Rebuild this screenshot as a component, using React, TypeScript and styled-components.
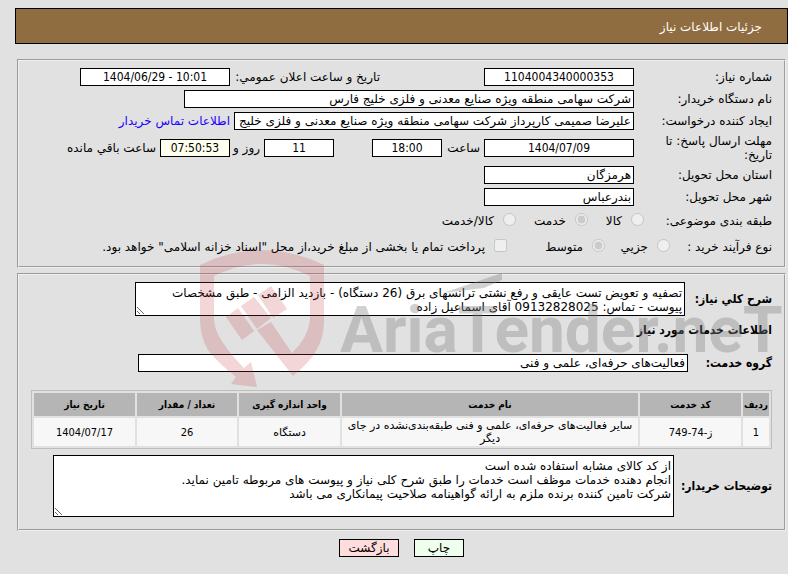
import React from 'react';
import styled, { createGlobalStyle } from 'styled-components';

const narrowFont = "'DejaVu Sans Condensed', 'DejaVu Sans', sans-serif";

const GlobalStyle = createGlobalStyle`
  * { box-sizing: border-box; }
  body {
    margin: 0;
    background: #e1e1e1;
    color: #000;
  }
  body, input, textarea, button {
    font-family: 'DejaVu Sans', sans-serif;
    font-size: 12px;
    line-height: 14px;
  }
`;

const Page = styled.main`
  direction: rtl;
  position: relative;
  padding: 8px 0 16px 15px;
  overflow: hidden;
`;

const TitleBar = styled.h1`
  margin: 0 0 15px;
  padding: 11px 25px 9px;
  border: 1px solid #000;
  background: #8f6d40;
  color: #fff;
  font-size: 12px;
  font-weight: normal;
  line-height: 14px;
`;

const Panel = styled.fieldset`
  min-width: 0;
  margin: 0 2px 5px;
  padding: 7px 12px 4px;
  border: 2px groove #f0f0f0;
`;

const DetailPanel = styled(Panel)`
  padding-bottom: 8px;
`;

const Row = styled.div<{ $height?: number }>`
  display: flex;
  align-items: center;
  gap: 4px;
  min-height: ${(p) => p.$height ?? 18}px;
  margin-bottom: 4px;
  white-space: nowrap;
`;

const Label = styled.label<{ $width?: number }>`
  flex: none;
  width: ${(p) => (p.$width ? `${p.$width}px` : 'auto')};
  white-space: nowrap;
`;

const BoldLabel = styled(Label)`
  font-family: ${narrowFont};
  font-weight: bold;
`;

const WrapLabel = styled(Label)`
  padding-left: 18px;
  white-space: normal;
`;

const Box = styled.input<{ $width: number }>`
  flex: 0 1 ${(p) => p.$width}px;
  width: ${(p) => p.$width}px;
  min-width: 0;
  height: 18px;
  padding: 1px 2px;
  border: 1px solid #000;
  border-radius: 0;
  background: #fff;
  text-align: right;
`;

const NumberBox = styled(Box)<{ $tint?: string }>`
  background: ${(p) => p.$tint ?? '#fff'};
  font-family: ${narrowFont};
  text-align: center;
`;

const Spacer = styled.span<{ $width: number }>`
  flex: none;
  width: ${(p) => p.$width}px;
`;

const ContactLink = styled.a`
  color: #1a00ff;
  text-decoration: none;
`;

const Choice = styled.label<{ $width?: number }>`
  display: flex;
  align-items: center;
  gap: 9px;
  flex: none;
  width: ${(p) => (p.$width ? `${p.$width}px` : 'auto')};

  input {
    flex: none;
    width: 13px;
    height: 13px;
    margin: 0 0 3px;
  }
`;

const Area = styled.textarea<{ $width: number; $height: number }>`
  flex: 0 1 ${(p) => p.$width}px;
  min-width: 0;
  height: ${(p) => p.$height}px;
  margin: 0;
  padding: 3px 2px 1px;
  border: 1px solid #000;
  border-radius: 0;
  background: #fff;
  overflow: hidden;
`;

const SectionTitle = styled.h2`
  margin: 7px 0 17px;
  font-family: ${narrowFont};
  font-size: 12px;
  font-weight: bold;
  line-height: 14px;
`;

const Items = styled.table`
  width: 100%;
  margin: 18px 0 6px;
  border: 1px solid #bdbdbd;
  border-collapse: separate;
  border-spacing: 2px;
  table-layout: fixed;
  font-size: 11px;
  line-height: 13px;
  text-align: center;

  th {
    height: 23px;
    padding: 1px 0;
    background: #b5b5b5;
    font-family: ${narrowFont};
    font-size: 10px;
  }
`;

const Cell = styled.td<{ $narrow?: boolean }>`
  height: 28px;
  padding: 1px;
  background: #f7f7f7;
  font-family: ${(p) => (p.$narrow ? narrowFont : 'inherit')};
`;

const Actions = styled.div`
  display: flex;
  justify-content: center;
  gap: 15px;
  padding-top: 3px;
`;

const Action = styled.button<{ $width: number; $tint: string }>`
  width: ${(p) => p.$width}px;
  height: 18px;
  padding: 0;
  border: 1px solid #000;
  border-radius: 0;
  background: ${(p) => p.$tint};
  color: #000;
`;

const Watermark = styled.svg`
  position: absolute;
  left: 200px;
  top: 248px;
  width: 600px;
  height: 142px;
  pointer-events: none;
  direction: ltr;
`;

const columns = [
  { title: 'ردیف', value: '1', width: 26, narrow: true },
  { title: 'کد خدمت', value: 'ز-74-749', width: 101, narrow: true },
  { title: 'نام خدمت', value: 'سایر فعالیت‌های حرفه‌ای، علمی و فنی طبقه‌بندی‌نشده در جای دیگر', width: 296 },
  { title: 'واحد اندازه گیری', value: 'دستگاه', width: 101 },
  { title: 'تعداد / مقدار', value: '26', width: 100, narrow: true },
  { title: 'تاریخ نیاز', value: '1404/07/17', width: 101, narrow: true },
];

export default function App() {
  return (
    <>
      <GlobalStyle />
      <Page lang="fa">
        <TitleBar>جزئیات اطلاعات نیاز</TitleBar>

        <Panel>
          <Row>
            <Label htmlFor="number" $width={134}>شماره نیاز:</Label>
            <NumberBox id="number" $width={150} readOnly value="1104004340000353" />
            <Spacer $width={96} />
            <Label htmlFor="announced" $width={146}>تاریخ و ساعت اعلان عمومي:</Label>
            <NumberBox id="announced" dir="ltr" $width={150} readOnly value="1404/06/29 - 10:01" />
          </Row>
          <Row>
            <Label htmlFor="org" $width={134}>نام دستگاه خریدار:</Label>
            <Box id="org" $width={450} readOnly value="شرکت سهامی منطقه ویژه صنایع معدنی و فلزی خلیج فارس" />
          </Row>
          <Row>
            <Label htmlFor="creator" $width={134}>ایجاد کننده درخواست:</Label>
            <Box
              id="creator"
              $width={400}
              readOnly
              value="علیرضا صمیمی کارپرداز شرکت سهامی منطقه ویژه صنایع معدنی و فلزی خلیج فارس"
            />
            <ContactLink href="#contact">اطلاعات تماس خریدار</ContactLink>
          </Row>
          <Row $height={28}>
            <WrapLabel htmlFor="deadline" $width={134}>مهلت ارسال پاسخ: تا تاریخ:</WrapLabel>
            <NumberBox id="deadline" $width={150} readOnly value="1404/07/09" />
            <Label htmlFor="hour" $width={34}>ساعت</Label>
            <NumberBox id="hour" $width={70} readOnly value="18:00" />
            <Spacer $width={30} />
            <NumberBox id="days" $width={70} readOnly value="11" />
            <Label htmlFor="days" $width={26}>روز و</Label>
            <NumberBox id="left" $width={70} $tint="#ffffee" readOnly value="07:50:53" />
            <Label htmlFor="left">ساعت باقي مانده</Label>
          </Row>
          <Row>
            <Label htmlFor="province" $width={134}>استان محل تحویل:</Label>
            <Box id="province" $width={150} readOnly value="هرمزگان" />
          </Row>
          <Row>
            <Label htmlFor="city" $width={134}>شهر محل تحویل:</Label>
            <Box id="city" $width={150} readOnly value="بندرعباس" />
          </Row>
          <Row $height={22} role="radiogroup" aria-labelledby="subject">
            <Label as="span" id="subject" $width={124}>طبقه بندی موضوعی:</Label>
            <Choice $width={52}><input type="radio" name="subject" disabled />کالا</Choice>
            <Choice $width={68}><input type="radio" name="subject" disabled defaultChecked />خدمت</Choice>
            <Choice><input type="radio" name="subject" disabled />کالا/خدمت</Choice>
          </Row>
          <Row $height={22} role="radiogroup" aria-labelledby="process">
            <Label as="span" id="process" $width={98}>نوع فرآیند خرید :</Label>
            <Choice $width={61}><input type="radio" name="process" disabled />جزیي</Choice>
            <Choice $width={94}><input type="radio" name="process" disabled defaultChecked />متوسط</Choice>
            <Choice><input type="checkbox" disabled />پرداخت تمام یا بخشی از مبلغ خرید،از محل "اسناد خزانه اسلامی" خواهد بود.</Choice>
          </Row>
        </Panel>

        <DetailPanel>
          <Row $height={34}>
            <BoldLabel htmlFor="summary" $width={83}>شرح کلي نیاز:</BoldLabel>
            <Area
              id="summary"
              $width={550}
              $height={34}
              readOnly
              value="تصفیه و تعویض تست عایقی و رفع نشتی ترانسهای برق (26 دستگاه) - بازدید الزامی - طبق مشخصات پیوست - تماس: 09132828025 آقای اسماعیل زاده"
            />
          </Row>
          <SectionTitle>اطلاعات خدمات مورد نیاز</SectionTitle>
          <Row>
            <BoldLabel htmlFor="group" $width={80}>گروه خدمت:</BoldLabel>
            <Box id="group" $width={550} readOnly value="فعالیت‌های حرفه‌ای، علمی و فنی" />
          </Row>
          <Items>
            <colgroup>
              {columns.map((c) => <col key={c.title} style={{ width: c.width }} />)}
            </colgroup>
            <thead>
              <tr>{columns.map((c) => <th key={c.title} scope="col">{c.title}</th>)}</tr>
            </thead>
            <tbody>
              <tr>{columns.map((c) => <Cell key={c.title} $narrow={c.narrow}>{c.value}</Cell>)}</tr>
            </tbody>
          </Items>
          <Row $height={62}>
            <BoldLabel htmlFor="notes" $width={94}>توضیحات خریدار:</BoldLabel>
            <Area
              id="notes"
              $width={621}
              $height={62}
              readOnly
              value={'از کد کالای مشابه استفاده شده است\nانجام دهنده خدمات موظف است خدمات را طبق شرح کلی نیاز و پیوست های مربوطه تامین نماید.\nشرکت تامین کننده برنده ملزم به ارائه گواهینامه صلاحیت پیمانکاری می باشد'}
            />
          </Row>
        </DetailPanel>

        <Actions>
          <Action type="button" $width={50} $tint="#eeffee">چاپ</Action>
          <Action type="button" $width={60} $tint="#ffdddd">بازگشت</Action>
        </Actions>

        <Watermark viewBox="0 0 600 142" aria-hidden="true">
          <g fill="#c4323c" fillOpacity="0.2">
            <path d="M0 17Q62-13 124 17V72Q124 90 116 103Q110 114 93 128L57 82L71 74L92 105Q108 90 110 72V28Q62 4 14 28V72Q15 82 20 90Q28 104 44 120L51 114L57 139L31 136L36 129Q18 115 8 102Q0 88 0 72Z" />
            <path d="M26 69L38 60L54 83L42 92Z" />
            <path d="M41 58L54 49L71 70L57 81Z" />
            <path d="M58 47L71 38L87 61L73 70Z" />
          </g>
          <path d="M243 45L302 25V32L284 40Z" fill="#808080" fillOpacity="0.36" />
          <text
            x="140"
            y="104"
            fill="#808080"
            fillOpacity="0.36"
            fontFamily="Roboto, sans-serif"
            fontSize="64"
            fontWeight="bold"
          >
            AriaTender.neT
          </text>
        </Watermark>
      </Page>
    </>
  );
}
